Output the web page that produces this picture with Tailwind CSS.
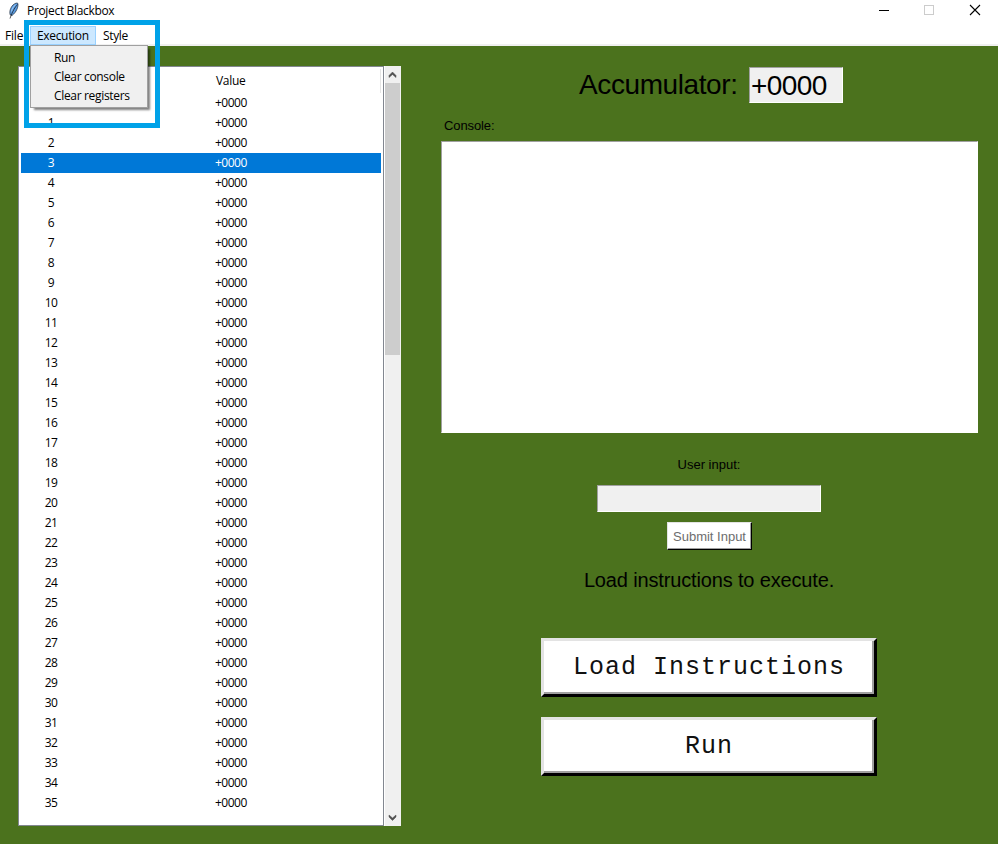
<!DOCTYPE html>
<html lang="en">
<head>
<meta charset="utf-8">
<title>Project Blackbox</title>
<script src="https://cdn.jsdelivr.net/npm/@tailwindcss/browser@4"></script>
</head>
<body class="w-[998px] h-[844px] overflow-hidden bg-white text-black font-['Open_Sans',sans-serif] text-[12px]">
<div class="relative flex flex-col w-[998px] h-[844px]">
  <header class="flex h-[22px] shrink-0 items-center pl-[7px]">
    <svg class="w-[13px] h-[18px]" viewBox="0 0 13 18">
      <path d="M3.300 13C2 10 3.500 5.500 6 3C8 1.200 10.300 0.500 10.900 1.500C11.400 4.500 9.700 10 5 13.500Z" fill="#5b9be0" stroke="#1c2a3a" stroke-width="0.7"/>
      <path d="M10.500 2.500C8.200 5 5.500 9 3 16.500" fill="none" stroke="#101010" stroke-width="0.7"/>
      <path d="M8.300 3C6.300 4.500 5 7 4.500 9.500" fill="none" stroke="#a5d0fa" stroke-width="0.9"/>
    </svg>
    <h1 class="ml-[7px] tracking-[-0.33px] leading-[20px]">Project Blackbox</h1>
    <div class="ml-auto flex items-center">
      <svg class="w-[119px] h-[20px]" viewBox="0 0 119 20" fill="none" shape-rendering="crispEdges">
        <path d="M0 9.500H10" stroke="#000"/>
        <path d="M45.500 4.500H54.500V13.500H45.500Z" stroke="#ccc"/>
        <path d="M91 4L101 14M101 4L91 14" stroke="#000" stroke-width="1.1" shape-rendering="auto"/>
      </svg>
    </div>
  </header>
  <nav class="flex h-[24px] shrink-0 items-start border-b-2 border-[#f0f0f0] pt-[4px] leading-[19px]">
    <span class="w-[30px] pl-[5px] tracking-[-0.2px]">File</span>
    <span class="w-[66px] h-[19px] border border-[#99d1ff] bg-[#cce8ff] pl-[6px] leading-[18px] tracking-[-0.33px]">Execution</span>
    <span class="pl-[7px] tracking-[-0.35px]">Style</span>
  </nav>
  <main class="flex grow bg-[#4b721d] pt-[20px] pl-[18px] pr-[20px]">
    <section class="flex w-[383px] h-[760px] shrink-0">
      <div class="w-[366px] border border-[#828790] bg-white pl-[2px] pr-[2px] pt-[2px]">
        <div class="flex h-[24px] border-r border-[#e5e5e5] pl-[195px] leading-[24px] tracking-[-0.3px]">Value</div>
        <div id="registers"></div>
      </div>
      <div class="flex flex-col w-[17px] bg-[#f0f0f0] border-l border-white">
        <svg class="w-[16px] h-[17px]" viewBox="0 0 16 17"><path d="M4 11.500V9.500L7.500 6L11 9.500V11.500L7.500 8.500Z" fill="#505050" stroke="#505050" stroke-width="0.5"/></svg>
        <div class="h-[272px] w-[15px] bg-[#cdcdcd]"></div>
        <svg class="mt-auto w-[16px] h-[17px]" viewBox="0 0 16 17"><path d="M4 6V8L7.500 11.500L11 8V6L7.500 9Z" fill="#505050" stroke="#505050" stroke-width="0.5"/></svg>
      </div>
    </section>
    <section class="ml-[40px] flex w-[537px] flex-col items-center font-['Liberation_Sans',Arial,sans-serif]">
      <div class="mt-px flex h-[36px] items-center pl-[3px]">
        <span class="mr-[12px] w-[158px] text-[28px] leading-[38px] tracking-[-0.4px] whitespace-nowrap">Accumulator:</span>
        <div class="h-[36px] w-[94px] border border-t-[#a0a0a0] border-l-[#a0a0a0] border-r-white border-b-white bg-[#f0f0f0] pl-px text-[28px] leading-[35px] tracking-[-0.6px]">+0000</div>
      </div>
      <div class="mt-[14px] h-[18px] self-start pl-[3px] text-[13px] leading-[18px] tracking-[-0.1px]">Console:</div>
      <div class="mt-[6px] h-[292px] w-[537px] shrink-0 border border-t-[#a0a0a0] border-l-[#a0a0a0] border-r-white border-b-white bg-white"></div>
      <div class="flex w-[536px] self-start flex-col items-center">
        <div class="mt-[23px] h-[18px] text-[13px] leading-[18px]">User input:</div>
        <div class="mt-[11px] h-[27px] w-[224px] border border-t-[#a0a0a0] border-l-[#a0a0a0] border-r-white border-b-white bg-[#f0f0f0]"></div>
        <button class="mt-[10px] ml-px h-[28px] w-[85px] border border-t-[#e3e3e3] border-l-[#e3e3e3] border-r-black border-b-black bg-white text-[13px] text-[#6d6d6d] shadow-[inset_-1px_-1px_0_#a0a0a0] whitespace-nowrap leading-[28px]">Submit Input</button>
        <div class="mt-[18px] h-[24px] text-[20px] leading-[24px] whitespace-nowrap tracking-[-0.15px]">Load instructions to execute.</div>
        <button class="mt-[46px] h-[59px] w-[336px] border-[3px] border-t-[#e3e3e3] border-l-[#e3e3e3] border-r-black border-b-black bg-white font-['Liberation_Mono','Courier_New',monospace] text-[25px] text-[#111] leading-[53px] shadow-[inset_-2px_-2px_0_#a0a0a0] whitespace-nowrap tracking-[1px]">Load Instructions</button>
        <button class="mt-[20px] h-[59px] w-[336px] border-[3px] border-t-[#e3e3e3] border-l-[#e3e3e3] border-r-black border-b-black bg-white font-['Liberation_Mono','Courier_New',monospace] text-[25px] text-[#111] leading-[53px] shadow-[inset_-2px_-2px_0_#a0a0a0] tracking-[1px]">Run</button>
      </div>
    </section>
  </main>
  <div class="absolute left-[30px] top-[45px] w-[118px] h-[63px] border border-[#a0a0a0] bg-[#f0f0f0] pt-[2px] pl-[23px] leading-[19px] tracking-[-0.33px] shadow-[3px_3px_2px_-1px_rgba(0,0,0,0.5)]">
    <div>Run</div><div>Clear console</div><div>Clear registers</div>
  </div>
  <div class="absolute left-[24px] top-[20px] w-[136px] h-[108px] border-[5px] border-[#00a2e8]"></div>
</div>
<script>
  const rows = [];
  for (let i = 0; i < 36; i++) {
    const tone = i === 3 ? 'bg-[#0078d7] text-white' : '';
    rows.push(`<div class="flex h-[20px] leading-[20px] tracking-[-0.5px] ${tone}"><span class="w-[60px] text-center">${i}</span><span class="pl-[134px]">+0000</span></div>`);
  }
  document.getElementById('registers').innerHTML = rows.join('');
</script>
</body>
</html>
